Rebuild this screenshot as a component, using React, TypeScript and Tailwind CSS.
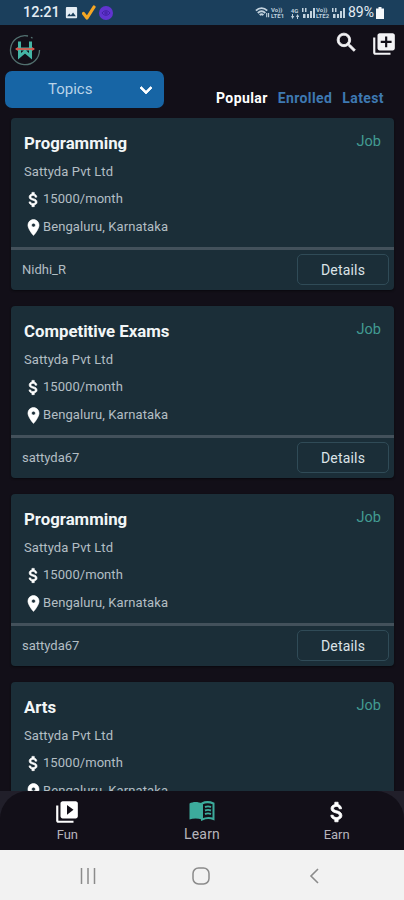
import { useState } from 'react';
import { MdImage, MdLibraryAdd, MdVideoLibrary } from 'react-icons/md';

type Job = {
    id: number;
    title: string;
    author: string;
};

const jobs: Job[] = [
    { id: 1, title: 'Programming', author: 'Nidhi_R' },
    { id: 2, title: 'Competitive Exams', author: 'sattyda67' },
    { id: 3, title: 'Programming', author: 'sattyda67' },
    { id: 4, title: 'Arts', author: 'sattyda67' },
];

const filters = ['Popular', 'Enrolled', 'Latest'];

const iconPaths = {
    search: 'M15.5 14h-.79l-.28-.27A6.471 6.471 0 0 0 16 9.5 6.5 6.5 0 1 0 9.5 16c1.61 0 3.09-.59 4.23-1.57l.27.28v.79l5 4.99L20.49 19l-4.99-5zm-6 0C7.01 14 5 11.99 5 9.5S7.01 5 9.5 5 14 7.01 14 9.5 11.99 14 9.5 14z',
    money: 'M11.8 10.9c-2.27-.59-3-1.2-3-2.15 0-1.09 1.01-1.85 2.7-1.85 1.78 0 2.44.85 2.5 2.1h2.21c-.07-1.72-1.12-3.3-3.21-3.81V3h-3v2.16c-1.94.42-3.5 1.68-3.5 3.61 0 2.31 1.91 3.46 4.7 4.13 2.5.6 3 1.48 3 2.41 0 .69-.49 1.79-2.7 1.79-2.06 0-2.87-.92-2.98-2.1h-2.2c.12 2.19 1.76 3.42 3.68 3.83V21h3v-2.15c1.95-.37 3.5-1.5 3.5-3.55 0-2.84-2.43-3.81-4.7-4.4z',
    pin: 'M12 2C8.13 2 5 5.13 5 9c0 5.25 7 13 7 13s7-7.75 7-13c0-3.87-3.13-7-7-7zm0 9.500a2.500 2.500 0 0 1 0-5 2.500 2.500 0 0 1 0 5z',
    down: 'M7.41 8.59L12 13.17l4.59-4.58L18 10l-6 6-6-6z',
};

// Material glyphs, drawn slightly heavier than the stock set
function BoldIcon({ name, className }: { name: keyof typeof iconPaths; className: string }) {
    return (
        <svg viewBox="0 0 24 24" fill="currentColor" stroke="currentColor" strokeWidth="0.8" className={className}>
            <path d={iconPaths[name]} />
        </svg>
    );
}

function SignalBars() {
    return (
        <svg width="14" height="12" viewBox="0 0 14 12" fill="#c3d3df">
            <path d="M0 1h1.5v4H0zM3 1h1.5v4H3zM1 7h2.5v4H1zM5 7h2v4H5zM8 4h2v7H8zM11 1h2v10h-2z" />
        </svg>
    );
}

function VoLte({ sim }: { sim: number }) {
    return (
        <span className="flex flex-col text-[6px] leading-[6px] font-bold text-[#bfd0dc]">
            <span>Vo))</span>
            <span>LTE{sim}</span>
        </span>
    );
}

function StatusBar() {
    return (
        <div className="flex h-[25px] shrink-0 items-center bg-[#1b3f5c] pr-[20px] pl-[23px] text-[#e4edf4]">
            <span className="w-[36px] text-[14.500px] font-medium whitespace-nowrap">12:21</span>
            <MdImage className="ml-[5px] size-[15px]" />
            <svg className="ml-[3px]" width="14" height="16" viewBox="0 0 14 16">
                <path d="M1.5 8.5 5 13 12 2" fill="none" stroke="#f5a623" strokeWidth="3.2" strokeLinecap="round" strokeLinejoin="round" />
            </svg>
            <svg className="ml-[3px]" width="14" height="14" viewBox="0 0 14 14" fill="none">
                <circle cx="7" cy="7" r="7" fill="#6034d0" />
                <path d="M3 7c2-3 6-3 8 0-2 3-6 3-8 0M5 7h4M7 5v4" stroke="#4222a3" />
            </svg>
            <div className="ml-auto flex items-center">
                <svg width="15" height="13" viewBox="0 0 16 13" fill="none" stroke="#c3d3df" strokeWidth="2">
                    <path d="M1 4.500C4.500 1 9.500 1 13 4.500M3 7c2.500-2.300 5.500-2.300 8 0M5 9.200c1.500-1.200 2.500-1.200 4 0" />
                    <path d="M12.500 7v4.500M14.500 7v4.500" strokeWidth="1.200" />
                </svg>
                <div className="ml-px w-[16px]"><VoLte sim={1} /></div>
                <div className="ml-[2px] flex w-[11px] flex-col items-center text-[6px] leading-[7px] font-bold text-[#bfd0dc]">
                    <span>4G</span>
                    <svg width="8" height="5" viewBox="0 0 8 5" fill="#bfd0dc">
                        <path d="M1 0h1v2h1.300L1.500 5 0 2h1zM6 5h1V3h1.300L6.500 0 5 3h1z" />
                    </svg>
                </div>
                <div className="ml-[2px]"><SignalBars /></div>
                <div className="w-[16px]"><VoLte sim={2} /></div>
                <SignalBars />
                <span className="ml-[2px] text-[14px]">89%</span>
                <svg className="ml-[2px]" width="8" height="12" viewBox="0 0 8 12" fill="#f4f8fb">
                    <path d="M2.500 0h3v1.500H8V12H0V1.500h2.500z" />
                </svg>
            </div>
        </div>
    );
}

function Logo() {
    return (
        <svg width="32" height="32" viewBox="0 0 32 32" fill="none">
            <path d="M19 2A14.500 14.500 0 1 0 30.500 16" stroke="#52706f" strokeWidth="1.300" />
            <path d="M22 3.300l1.500.8" stroke="#52706f" strokeWidth="1.300" />
            <path d="M10.500 7.500v14.800l5.500-4.800 5.500 4.800V7.500M10.500 15h11" stroke="#45b5a5" strokeWidth="3" />
            <path d="M7 15h18" stroke="#d6584d" strokeWidth="1.800" />
            <path d="M9 13l-3 2 3 2zM23 13l3 2-3 2z" fill="#d6584d" />
        </svg>
    );
}

function JobCard({ job }: { job: Job }) {
    return (
        <article className="flex h-[172px] shrink-0 flex-col rounded-[4px] bg-[#1b2e38] shadow-[0_1px_2px_#0a090e]">
            <div className="h-[129px] pt-[14px] pr-[13px] pl-[13px]">
                <div className="flex h-[23px] items-center justify-between">
                    <h2 className="text-[16.800px] font-bold text-[#f2f6f7]">{job.title}</h2>
                    <span className="mb-[4px] text-[14.500px] text-[#429b92]">Job</span>
                </div>
                <p className="mt-[7px] h-[20px] text-[13px] leading-[20px] tracking-[0.100px] text-[#b3bec4]">Sattyda Pvt Ltd</p>
                <div className="mt-[7px] flex h-[20px] items-center text-[13px] text-[#b3bec4]">
                    <BoldIcon name="money" className="size-[19px] text-white" />
                    <span className="tracking-[0.050px]">15000/month</span>
                </div>
                <div className="mt-[8px] flex h-[20px] items-center text-[13px] text-[#b3bec4]">
                    <BoldIcon name="pin" className="size-[19px] text-white" />
                    <span className="tracking-[0.100px]">Bengaluru, Karnataka</span>
                </div>
            </div>
            <div className="h-[3px] shrink-0 bg-[#43515b]" />
            <div className="flex flex-1 items-center justify-between pr-[5px] pb-px pl-[11px]">
                <span className="text-[13px] text-[#b3bec4]">{job.author}</span>
                <button className="h-[31px] w-[92px] rounded-[5px] border border-[#304b57] pt-px text-[14px] tracking-[0.200px] text-[#dbe3e7]">Details</button>
            </div>
        </article>
    );
}

function BookIcon() {
    return (
        <svg width="26" height="22" viewBox="0 0 26 22">
            <path d="M0.500 3.500C4 1.500 9 1.500 13 3.500v16C9 18 4 18 .5 19.500z" fill="#3cab9c" />
            <path d="M13 3.500c3.500-1.800 7.500-1.800 11.500 0V19c-3.500-1.300-7.500-1.300-11.500.5z" fill="none" stroke="#3cab9c" strokeWidth="2" />
            <path d="M16 7c2-.8 4-.8 6 0M16 10.500c2-.8 4-.8 6 0M16 14c2-.8 4-.8 6 0" fill="none" stroke="#3cab9c" strokeWidth="1.900" />
        </svg>
    );
}

function BottomNav() {
    return (
        <div className="h-[59px] shrink-0 bg-[#211f2a]">
            <nav className="grid h-full grid-cols-3 rounded-t-[28px] bg-[#120f18] text-[13px] text-[#b7b5bc]">
                <div className="flex flex-col items-center pt-[8px]">
                    <MdVideoLibrary className="size-[26px] text-white" />
                    <span className="leading-[20px]">Fun</span>
                </div>
                <div className="flex flex-col items-center pt-[9px]">
                    <div className="h-[24px]"><BookIcon /></div>
                    <span className="text-[14px] leading-[20px] tracking-[0.200px]">Learn</span>
                </div>
                <div className="flex flex-col items-center pt-[8px]">
                    <BoldIcon name="money" className="size-[26px] text-white" />
                    <span className="leading-[20px]">Earn</span>
                </div>
            </nav>
        </div>
    );
}

function SystemBar() {
    return (
        <div className="flex h-[50px] shrink-0 items-center bg-[#f2f2f2] pt-px pl-[80px]">
            <svg width="16" height="16" viewBox="0 0 16 16" stroke="#8b8b8b" strokeWidth="1.500">
                <path d="M1.500 0v16M8 0v16M14.500 0v16" />
            </svg>
            <svg className="ml-[96px]" width="18" height="18" viewBox="0 0 18 18" fill="none" stroke="#8b8b8b" strokeWidth="1.500">
                <rect x="1" y="1" width="16" height="16" rx="5.500" />
            </svg>
            <svg className="ml-[98px]" width="12" height="16" viewBox="0 0 12 16" fill="none" stroke="#8b8b8b" strokeWidth="1.600">
                <path d="M10 1 3 8l7 7" />
            </svg>
        </div>
    );
}

export default function App() {
    const [active, setActive] = useState('Popular');

    return (
        <div className="flex h-[900px] w-[404px] flex-col overflow-hidden bg-[#120f18] font-['Roboto',sans-serif]">
            <StatusBar />

            <header className="flex h-[46px] shrink-0 justify-between pt-[5px] pr-[7px] pl-[9px]">
                <div className="pt-[4px]"><Logo /></div>
                <div className="flex gap-[12px] text-[#f3f3f5]">
                    <BoldIcon name="search" className="size-[25px]" />
                    <MdLibraryAdd className="mt-px size-[26px]" />
                </div>
            </header>

            {/* Topic picker and sorting */}
            <div className="flex h-[47px] shrink-0 justify-between pr-[20px] pl-[5px]">
                <button className="flex h-[37px] w-[159px] items-center rounded-[7px] bg-[#1765a5] pl-[43px] text-[15px] text-[#b8d3e8]">
                    Topics
                    <BoldIcon name="down" className="mr-[6px] ml-auto size-[24px] text-white" />
                </button>
                <div className="flex gap-[10px] pt-[17px] text-[14px] leading-[20px] font-bold tracking-[0.400px]">
                    {filters.map((name) => (
                        <button
                            key={name}
                            onClick={() => setActive(name)}
                            className={`h-[20px] ${active === name ? 'text-white' : 'text-[#3e79b2]'}`}
                        >
                            {name}
                        </button>
                    ))}
                </div>
            </div>

            <main className="flex min-h-0 flex-1 flex-col gap-[16px] overflow-hidden pr-[10px] pl-[11px]">
                {jobs.map((job) => (
                    <JobCard key={job.id} job={job} />
                ))}
            </main>

            <BottomNav />
            <SystemBar />
        </div>
    );
}
